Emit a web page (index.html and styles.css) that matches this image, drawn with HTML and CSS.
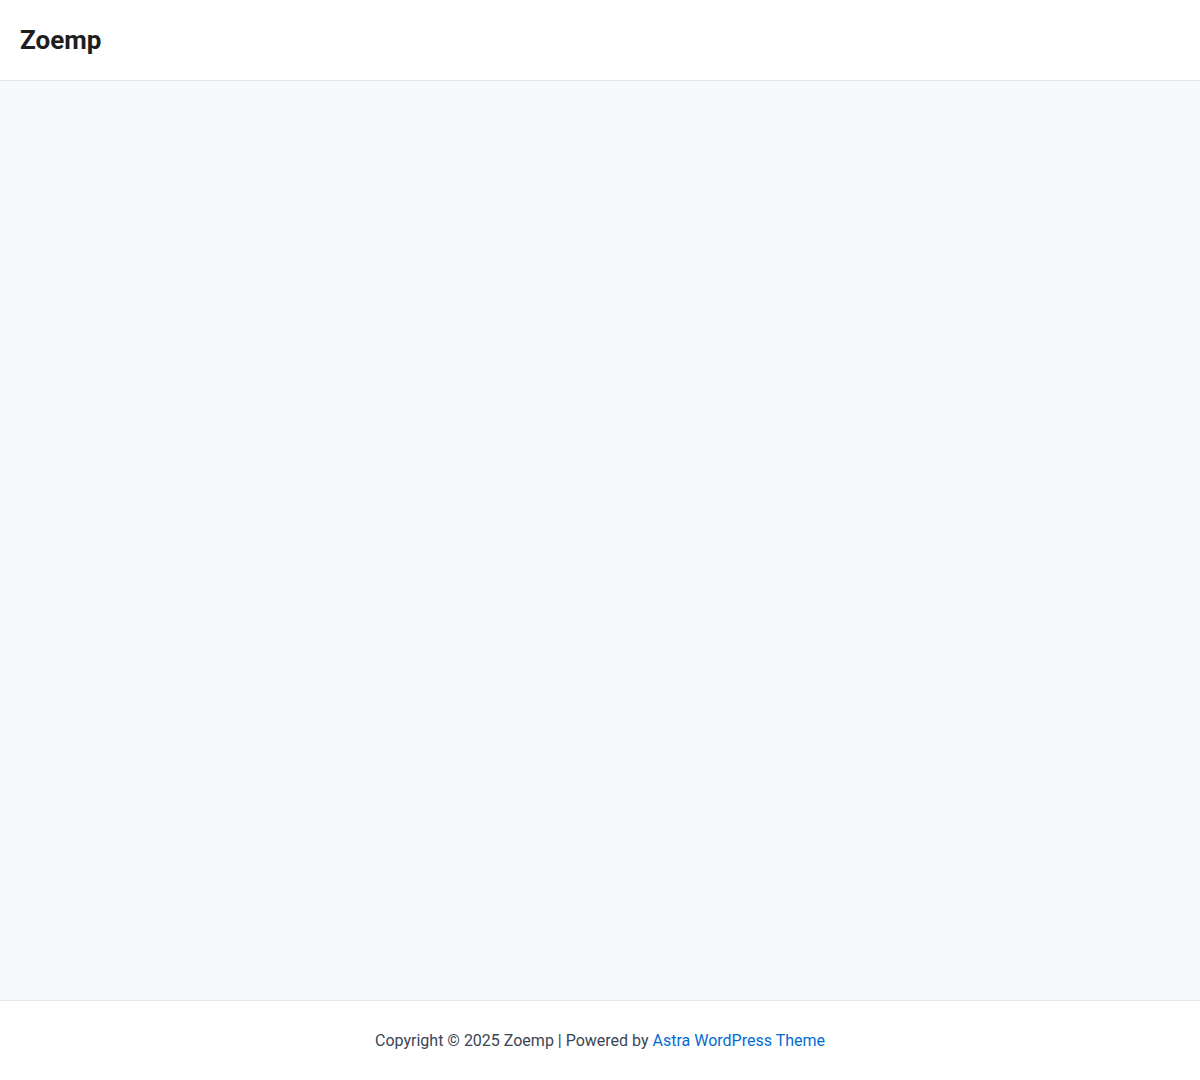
FILE: index.html
```html
<!DOCTYPE html>
<html lang="en">
<head>
<meta charset="utf-8">
<title>Zoemp</title>
<link rel="stylesheet" href="styles.css">
</head>
<body>
<header class="site-header">
  <div class="site-title">Zoemp</div>
</header>
<main class="site-content"></main>
<footer class="site-footer">
  <div class="footer-text">Copyright © 2025 Zoemp | Powered by <a href="#" class="footer-link">Astra WordPress Theme</a></div>
</footer>
</body>
</html>
```
FILE: styles.css
```css
* { box-sizing: border-box; }
html, body { margin: 0; padding: 0; }
body {
  font-family: Roboto, "Liberation Sans", sans-serif;
  background: #ffffff;
  color: #334155;
  display: flex;
  flex-direction: column;
  min-height: 1080px;
}
.site-header {
  height: 81px;
  border-bottom: 1px solid #e2e8f0;
  display: flex;
  align-items: center;
  padding: 0 20px;
  background: #ffffff;
}
.site-title {
  font-size: 26px;
  font-weight: 700;
  color: #1e1e1e;
  line-height: 1;
}
.site-content {
  height: 919px;
  background: #f8f9fb;
}
.site-footer {
  height: 80px;
  border-top: 1px solid #e2e8f0;
  display: flex;
  align-items: center;
  justify-content: center;
  background: #ffffff;
}
.footer-text {
  font-size: 16px;
  color: #3a4556;
}
.footer-link {
  color: #046bd2;
  text-decoration: none;
}
```
